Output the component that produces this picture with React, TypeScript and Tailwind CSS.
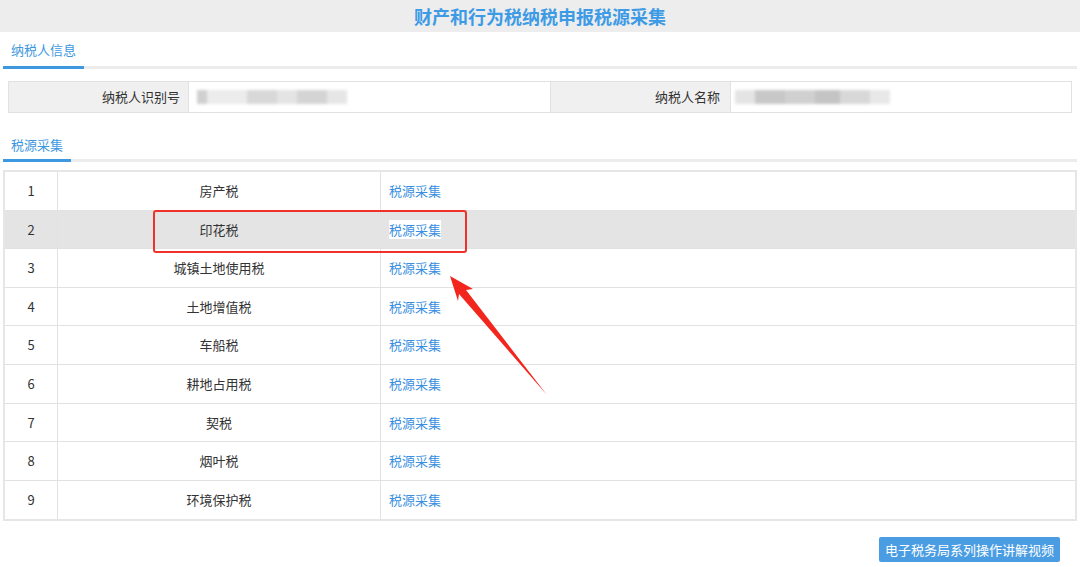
import React from "react";

const taxes = [
  "房产税",
  "印花税",
  "城镇土地使用税",
  "土地增值税",
  "车船税",
  "耕地占用税",
  "契税",
  "烟叶税",
  "环境保护税",
];

function Smudge({ widths }: { widths: { w: number; c: string }[] }) {
  return (
    <div className="flex items-center h-[16px] blur-[1.5px]">
      {widths.map((s, i) => (
        <div key={i} className="h-[14px]" style={{ width: s.w, background: s.c }} />
      ))}
    </div>
  );
}

export default function App() {
  return (
    <div
      className="relative w-[1080px] h-[567px] bg-white overflow-hidden text-[13px] text-[#333]"
      style={{ fontFamily: '"Noto Sans CJK SC", "Noto Sans", sans-serif' }}
    >
      <div className="h-[32px] bg-[#ededed] flex items-center justify-center text-[18px] font-bold text-[#3d9be6]">
        财产和行为税纳税申报税源采集
      </div>

      <div className="px-[3px]">
        <div className="mt-[8px] border-b-[3px] border-[#ececec] flex">
          <div className="px-[8px] pb-[6px] -mb-[3px] border-b-[3px] border-[#3d98e0] text-[#3d98e0] leading-[20px]">
            纳税人信息
          </div>
        </div>

        <div className="mx-[5px] mt-[12px] h-[32px] border border-[#e2e2e2] flex">
          <div className="w-[180px] bg-[#f0f0f0] flex items-center justify-end pr-[8px] border-r border-[#e2e2e2]">
            纳税人识别号
          </div>
          <div className="w-[362px] flex items-center pl-[8px] border-r border-[#e2e2e2]">
            <Smudge
              widths={[
                { w: 10, c: "#d0d0d0" },
                { w: 40, c: "#ececec" },
                { w: 30, c: "#d8d8d8" },
                { w: 20, c: "#e4e4e4" },
                { w: 30, c: "#d4d4d4" },
                { w: 20, c: "#e6e6e6" },
              ]}
            />
          </div>
          <div className="w-[180px] bg-[#f0f0f0] flex items-center justify-end pr-[10px] border-r border-[#e2e2e2]">
            纳税人名称
          </div>
          <div className="flex-1 flex items-center pl-[4px]">
            <Smudge
              widths={[
                { w: 20, c: "#e4e4e4" },
                { w: 30, c: "#c8c8c8" },
                { w: 30, c: "#d0d0d0" },
                { w: 25, c: "#c4c4c4" },
                { w: 30, c: "#d8d8d8" },
                { w: 20, c: "#e8e8e8" },
              ]}
            />
          </div>
        </div>

        <div className="mt-[22px] border-b-[3px] border-[#ececec] flex">
          <div className="px-[8px] pb-[4px] -mb-[3px] border-b-[3px] border-[#3d98e0] text-[#3d98e0] leading-[20px]">
            税源采集
          </div>
        </div>

        <div className="mt-[8px] border-2 border-[#e6e6e6]">
          {taxes.map((t, i) => (
            <div
              key={t}
              className={`flex h-[38.6px] ${i < taxes.length - 1 ? "border-b border-[#e2e2e2]" : ""} ${
                i === 1 ? "bg-[#e4e4e4]" : "bg-white"
              }`}
            >
              <div className="w-[53px] flex items-center justify-center border-r border-[#e2e2e2]">
                {i + 1}
              </div>
              <div className="w-[323px] flex items-center justify-center border-r border-[#e2e2e2]">{t}</div>
              <div className="flex-1 flex items-center pl-[8px]">
                <span className={`text-[#3a8fe0] ${i === 1 ? "bg-white" : ""}`}>税源采集</span>
              </div>
            </div>
          ))}
        </div>

        <div className="flex justify-end pr-[17px] mt-[16px]">
          <div className="h-[25px] px-[6px] bg-[#4a9de2] rounded-[2px] text-white flex items-center">
            电子税务局系列操作讲解视频
          </div>
        </div>
      </div>

      <div className="absolute left-[153px] top-[210px] w-[314px] h-[43px] border-2 border-[#f0332a] rounded-[3px]" />

      <svg className="absolute left-0 top-0 pointer-events-none" width="1080" height="567">
        <polygon
          points="450,276 473,289 466,290 547,395 459,294 458,301"
          fill="#f2261c"
        />
      </svg>
    </div>
  );
}
